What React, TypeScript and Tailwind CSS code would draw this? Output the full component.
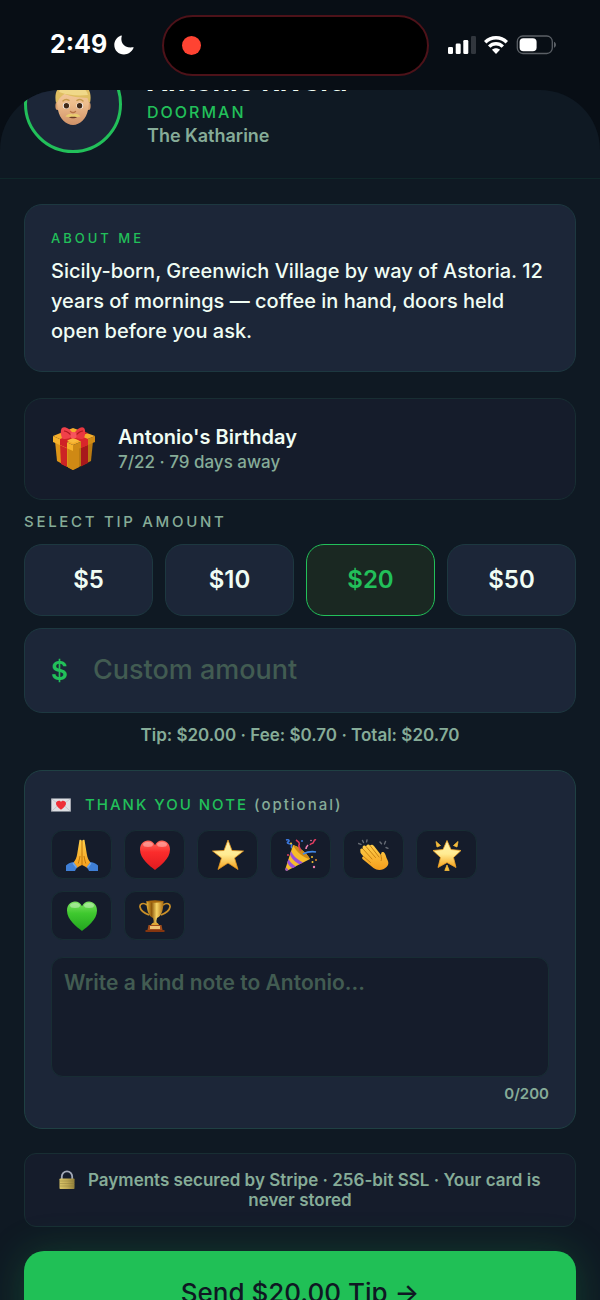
import React, { useState } from 'react';

interface Reaction {
    name: string;
    char: string;
    icon: React.ReactNode;
}

// gradients shared by all the emoji drawings
const Gradients = () => (
    <svg width="0" height="0" className="absolute" aria-hidden="true">
        <defs>
            <linearGradient id="skin" x1="0" y1="0" x2="0" y2="1">
                <stop offset="0" stopColor="#f6cfa4" />
                <stop offset="0.5" stopColor="#edbd8c" />
                <stop offset="1" stopColor="#cf9168" />
            </linearGradient>
            <linearGradient id="hand" x1="0" y1="0" x2="0" y2="1">
                <stop offset="0" stopColor="#ffcf4a" />
                <stop offset="1" stopColor="#f49d1c" />
            </linearGradient>
            <linearGradient id="red" x1="0" y1="0" x2="0" y2="1">
                <stop offset="0" stopColor="#ff6a5c" />
                <stop offset="0.4" stopColor="#fb2c2c" />
                <stop offset="1" stopColor="#e01a1f" />
            </linearGradient>
            <linearGradient id="green" x1="0" y1="0" x2="0" y2="1">
                <stop offset="0" stopColor="#7fe264" />
                <stop offset="0.4" stopColor="#3fc92f" />
                <stop offset="1" stopColor="#22a51f" />
            </linearGradient>
            <linearGradient id="star" x1="0" y1="0" x2="0" y2="1">
                <stop offset="0" stopColor="#fff3b0" />
                <stop offset="0.5" stopColor="#ffeb92" />
                <stop offset="1" stopColor="#f5a21b" />
            </linearGradient>
            <linearGradient id="gold" x1="0" y1="0" x2="1" y2="0">
                <stop offset="0" stopColor="#e9b53a" />
                <stop offset="0.3" stopColor="#8f5a0c" />
                <stop offset="0.6" stopColor="#f6d464" />
                <stop offset="1" stopColor="#a96a10" />
            </linearGradient>
            <linearGradient id="brass" x1="0" y1="0" x2="1" y2="0">
                <stop offset="0" stopColor="#d8c468" />
                <stop offset="0.5" stopColor="#c0aa55" />
                <stop offset="1" stopColor="#93803a" />
            </linearGradient>
        </defs>
    </svg>
);

const Face = () => (
    <svg viewBox="0 0 36 44" className="h-[44px] w-[36px]" aria-hidden="true">
        <ellipse cx="2.400" cy="24" rx="2" ry="4" fill="#d9a06f" />
        <ellipse cx="33.600" cy="24" rx="2" ry="4" fill="#d9a06f" />
        <path d="M2 15C2 5 9 1 18 1s16 4 16 14c0 4 0 9-1 13-1.500 8.500-8 15-15 15S4.500 36.500 3 28C2 24 2 19 2 15z" fill="url(#skin)" />
        <path d="M1 21C-2 6 7 0 18 0s20 6 17 21c-1.500-1-2-3-2.500-5-8-.5-16-1-23-4-3 2-5 4-6 6 0 1-1 2-2.500 3z" fill="#dfbd62" />
        <path d="M4 10c8 3 18 4 29 3-2-7-8-11-15-11S6 4 4 10z" fill="#f0d889" />
        <path d="M8 19c1.500-1.500 4-1.700 6-.6M22 18.400c2-1.100 4.500-.9 6 .6" stroke="#c79a4c" strokeWidth="1.500" fill="none" strokeLinecap="round" />
        <ellipse cx="11.200" cy="23.800" rx="3.400" ry="3" fill="#fff" />
        <ellipse cx="24.800" cy="23.800" rx="3.400" ry="3" fill="#fff" />
        <circle cx="11.400" cy="23.800" r="2.700" fill="#422a18" />
        <circle cx="24.600" cy="23.800" r="2.700" fill="#422a18" />
        <path d="M15.500 29.500c1.500 1.300 3.500 1.300 5 0" stroke="#b87445" strokeWidth="1.400" fill="none" strokeLinecap="round" />
        <path d="M10.500 34.500c2-3 5.500-3.500 7.500-2 2-1.500 5.500-1 7.500 2-3 .8-12 .8-15 0z" fill="#e9cc70" />
        <path d="M14 35.200c3-.6 5-.6 8 0-2 1.500-6 1.500-8 0z" fill="#6b3a24" />
    </svg>
);

const Gift = () => (
    <svg viewBox="0 0 42 44" className="h-[44px] w-[42px]" aria-hidden="true">
        <path d="M2 14l18 9v20L4 34z" fill="#dd9518" />
        <path d="M40 14l-20 9v20l18-9z" fill="#b97a12" />
        <path d="M20 23v20l6-3V20zM20 23v20l-5-2.500V21z" fill="#cf8914" />
        <path d="M7 17l7 3.500V40l-6-3z" fill="#cc2425" />
        <path d="M28 20l7-3.500V36l-7 3.500z" fill="#a8181c" />
        <path d="M0 9l20 9v6L0 15z" fill="#f6b22b" />
        <path d="M42 9l-22 9v6l22-9z" fill="#cf8a15" />
        <path d="M20 1l22 8-22 9L0 9z" fill="#f5ad2a" />
        <path d="M7 6l21 8.500v6.500l7-3v-6L14 3.500z" fill="#d9262b" />
        <path d="M35 6L14 15v6l-7-3v-6L28 3.500z" fill="#cf2226" />
        <path d="M20 11l6 2.400-6 2.600-6-2.600z" fill="#f8bb3c" />
        <path d="M20 7C17 1 11-1 9 1s-1 8 0 10 8 1 11-2z" fill="#f0404a" />
        <path d="M21 7c3-6 8-8 10-6s1 8 0 10-8 1-11-2z" fill="#e93740" />
        <path d="M11 4c2 0 5 2 7 4M30 4c-2 0-5 2-7 4" stroke="#ad1820" strokeWidth="1.200" fill="none" />
        <rect x="17.500" y="5" width="6" height="6.500" rx="2.500" fill="#f7545c" />
    </svg>
);

const LoveLetter = () => (
    <svg viewBox="0 0 20 14" className="h-[14px] w-[20px]" aria-hidden="true">
        <rect x="0.300" y="0.500" width="19.400" height="13" rx="0.600" fill="#dedfe3" />
        <path d="M.5 13.300L8 6.500M19.500 13.300L12 6.500M.5.700L10 8l9.500-7.300" stroke="#b9bbc2" strokeWidth="0.700" fill="none" />
        <path d="M10 11.800C6.500 9 5 7.500 5 5.500S6.500 2.700 8 2.700c.9 0 1.600.5 2 1.200.4-.7 1.100-1.200 2-1.200 1.500 0 3 .8 3 2.800s-1.500 3.500-5 6.300z" fill="#ee2f38" />
    </svg>
);

const Lock = () => (
    <svg viewBox="0 0 16 20" className="mr-1 inline-block h-[20px] w-[16px] align-[-4px]" aria-hidden="true">
        <path d="M2.800 9V6.500a5.200 5.200 0 0 1 10.400 0V9" stroke="#a2a9b8" strokeWidth="1.800" fill="none" />
        <rect x="0.500" y="8.500" width="15" height="10.500" rx="0.800" fill="url(#brass)" />
        <path d="M.5 11h15M.5 13.500h15M.5 16h15" stroke="#85743a" strokeWidth="0.400" />
    </svg>
);

const Pray = () => (
    <svg viewBox="0 0 32 32" className="h-8 w-8" aria-hidden="true">
        <path d="M13.500 1c1.300-.6 2.300.2 2.500 1.500V26c-2 1-4 2-6 3.500L7 24c2.500-2.500 3.500-5 4.200-9z" fill="url(#hand)" />
        <path d="M18.500 1c-1.300-.6-2.300.2-2.500 1.500V26c2 1 4 2 6 3.500l3-5.500c-2.500-2.500-3.500-5-4.200-9z" fill="url(#hand)" />
        <path d="M16 2v24M14 17c-.5 3-1 5-1.800 7.500M18 17c.5 3 1 5 1.800 7.500" stroke="#ba7007" strokeWidth="0.900" fill="none" />
        <path d="M0 26.500c2-2 4-3 7.500-3.500l3.500 5c-.5 1.500-1.500 2.500-2 4H0z" fill="#3f7fd6" />
        <path d="M32 26.500c-2-2-4-3-7.500-3.500L21 28c.5 1.500 1.500 2.500 2 4h9z" fill="#3f7fd6" />
        <path d="M7 24l3.500 4.500M25 24l-3.500 4.500" stroke="#6da7ee" strokeWidth="1.300" />
    </svg>
);

const heartPath = 'M16 31C11 27 1 20 1 10.500 1 5 4.500 1.500 9 1.500c3.200 0 5.700 1.900 7 4.700 1.300-2.800 3.800-4.700 7-4.700 4.500 0 8 3.500 8 9C31 20 21 27 16 31z';

const Heart: React.FC<{ fill: string }> = ({ fill }) => (
    <svg viewBox="0 0 32 32" className="h-8 w-8" aria-hidden="true">
        <path d={heartPath} fill={fill} />
        <ellipse cx="9" cy="5.500" rx="5" ry="2.500" fill="#fff" opacity="0.350" />
        <ellipse cx="23" cy="5.500" rx="5" ry="2.500" fill="#fff" opacity="0.350" />
    </svg>
);

const Star = () => (
    <svg viewBox="0 0 32 32" className="h-8 w-8" aria-hidden="true">
        <path d="M16 1l4 10.500 11.500.5-9 7 3.500 11.500-10-6.500-10 6.500L9.500 19l-9-7 11.500-.5z" fill="url(#star)" stroke="#e5971f" strokeWidth="0.800" strokeLinejoin="round" />
    </svg>
);

const Party = () => (
    <svg viewBox="0 0 32 32" className="h-8 w-8" aria-hidden="true">
        <path d="M8 6c5 1 14 8 17 14L2.500 31.500C1 32 0 31 .500 29.500z" fill="#f6bd2b" />
        <path d="M8 6c5 1 14 8 17 14-6-1-14-7-17-14z" fill="#cf8a18" />
        <path d="M6 12c2 5 7 9 12 11.500l-3.500 1.800C10.500 23.500 6.500 19.500 5 15.500zM3.500 20c1.500 3 4.500 6 7.500 7.500l-3.500 1.700C5 27.700 3 25.500 2.200 23.500zM1 28.500l2.500 2.600-1.500.6C.6 32 0 31 .500 30z" fill="#9a51d6" />
        <path d="M1 1c3-1 4 1 2 2s1 2 3 2-1 3 1 4" stroke="#3b78dd" strokeWidth="1.500" fill="none" />
        <path d="M11 1c3 2 4 3 3 5s2 3 1 6M31 1c-2-1-2 2-3 3s-2 0-3 2" stroke="#e13c5f" strokeWidth="1.600" fill="none" />
        <path d="M18 15c4-2 8-3 13-2" stroke="#4289e7" strokeWidth="1.700" fill="none" />
        <path d="M21 10c0-2 1-3 2-4" stroke="#ed7fae" strokeWidth="1.600" fill="none" />
        <circle cx="17" cy="2" r="1" fill="#3b78dd" />
        <circle cx="6" cy="4.500" r="1" fill="#f4c531" />
        <circle cx="26" cy="1.500" r="0.800" fill="#ed7fae" />
        <circle cx="27" cy="18" r="1" fill="#f4c531" />
        <circle cx="31" cy="21" r="1" fill="#e38a29" />
        <circle cx="27.500" cy="23" r="1" fill="#f4c531" />
        <circle cx="29" cy="28" r="1.200" fill="#ed7fae" />
        <circle cx="3" cy="16" r="1" fill="#e13c5f" />
    </svg>
);

const Clap = () => (
    <svg viewBox="0 0 32 32" className="h-8 w-8" aria-hidden="true">
        <path d="M2.500 12c-1-2 1-3.300 2.500-2l-.5-2c.5-2 2.500-2 3.500-.7C9 5.300 11 5 12 6.500c1.500-1.500 3-.8 4 .5l7 9c0-2 .5-3.500 2-3 2.500.5 2.500 4 4.500 8 1.500 3 1 5-1 7-3.500 3.500-9 4-13 1L4.500 20c-1-1.500 0-2.500 1-2.500L3 14.500c-.7-1-.8-2-.5-2.500z" fill="url(#hand)" />
        <path d="M5 10l9 10M8 7.500l9.500 11M12 6.500l9 11.500M5.500 17.500l7 6" stroke="#c27a10" strokeWidth="0.900" fill="none" strokeLinecap="round" />
        <path d="M23 16c0 2 1 4 0 6" stroke="#c27a10" strokeWidth="0.900" fill="none" />
        <path d="M.5 4.500l2.500.8M4.500 1.500l1 2M9 1l-.4 1.800M22 3l1.500 1.700M27.500 2.500L26.500 5M28 8.500l2 .8" stroke="#666c75" strokeWidth="1.400" strokeLinecap="round" />
    </svg>
);

const GlowStar = () => (
    <svg viewBox="0 0 32 32" className="h-8 w-8" aria-hidden="true">
        <path d="M16 1.500l4 9 10 1-7.500 7 2.500 10-9-5-9 5 2.500-10-7.500-7 10-1z" fill="url(#star)" stroke="#f0a428" strokeWidth="0.800" strokeLinejoin="round" />
        <path d="M5 2.500l4.500 4L6 8zM27 2.500l-4.500 4L26 8zM16 26l2.200 5.500h-4.400z" fill="#f6bd3b" stroke="#f6bd3b" strokeWidth="0.800" strokeLinejoin="round" />
    </svg>
);

const Trophy = () => (
    <svg viewBox="0 0 32 32" className="h-8 w-8" aria-hidden="true">
        <path d="M8 5C4 2 .500 4 1 7s4 6 9 8M24 5c4-3 7.500-1 7 2s-4 6-9 8" stroke="#c98f28" strokeWidth="1.700" fill="none" />
        <path d="M7.500 1h17c0 8-1.500 15-6.500 17l-.7 3 .7 3h-4l.7-3-.7-3C9 16 7.500 9 7.500 1z" fill="url(#gold)" />
        <ellipse cx="16" cy="1.500" rx="8.500" ry="1.200" fill="#a8690f" />
        <path d="M13.500 23h5l2 2.500h-9z" fill="#e0a834" />
        <path d="M9.500 25h13l1 5h-15z" fill="#a04c1b" />
        <rect x="11" y="26" width="10" height="3" fill="#f0c473" />
        <path d="M6.500 30h19v2h-19z" fill="#84350f" />
    </svg>
);

const reactions: Reaction[] = [
    { name: 'Thank you', char: '🙏', icon: <Pray /> },
    { name: 'Love', char: '❤️', icon: <Heart fill="url(#red)" /> },
    { name: 'Star', char: '⭐', icon: <Star /> },
    { name: 'Celebrate', char: '🎉', icon: <Party /> },
    { name: 'Applause', char: '👏', icon: <Clap /> },
    { name: 'Glowing star', char: '🌟', icon: <GlowStar /> },
    { name: 'Green heart', char: '💚', icon: <Heart fill="url(#green)" /> },
    { name: 'Trophy', char: '🏆', icon: <Trophy /> },
];

const amounts = [5, 10, 20, 50];
const NOTE_LIMIT = 200;
const FEE_RATE = 0.035;

const StatusBar = () => (
    <header className="flex h-[90px] shrink-0 items-center justify-between pr-11 pl-[50px] text-white">
        <div className="flex items-center gap-[7px]">
            <span className="text-[25px] font-bold">2:49</span>
            <svg viewBox="0 0 20 20" className="h-5 w-5" fill="currentColor" aria-hidden="true">
                <path d="M7.800 1C6 6.800 9.500 13.500 19 12.300c.6-.1.800.3.500.8C17.600 17 14 19.500 10 19.500 4.600 19.500.300 15.400.300 10 .300 5.700 3 2 7 .5c.6-.2 1 0 .8.5z" />
            </svg>
        </div>
        <div className="mr-[-8px] flex h-[61px] w-[267px] items-center rounded-full border-2 border-[#4d1219] bg-black px-[18px]">
            <span className="h-[19px] w-[19px] rounded-full bg-[#ff4332]" />
        </div>
        <div className="flex items-center gap-2">
            <svg viewBox="0 0 28 18" className="h-[18px] w-[28px]" aria-hidden="true">
                <rect x="0" y="11" width="5" height="7" rx="1.300" fill="#fff" />
                <rect x="7.700" y="7.500" width="5" height="10.500" rx="1.300" fill="#fff" />
                <rect x="15.300" y="4" width="5" height="14" rx="1.300" fill="#fff" />
                <rect x="23" y="0" width="5" height="18" rx="1.300" fill="#31363d" />
            </svg>
            <svg viewBox="0 0 24 18" className="h-[18px] w-[24px]" fill="none" stroke="#fff" strokeWidth="3.400" aria-hidden="true">
                <path d="M1.200 6.200c6-6 15.600-6 21.600 0" />
                <path d="M5.200 10.600c3.800-3.800 9.800-3.800 13.600 0" />
                <path d="M12 18l-4-4.200c2.200-2 5.800-2 8 0z" fill="#fff" stroke="none" />
            </svg>
            <svg viewBox="0 0 40 20" className="h-[20px] w-[40px]" aria-hidden="true">
                <rect x="1.300" y="1" width="35" height="17.500" rx="5.500" fill="none" stroke="#5b6066" strokeWidth="1.300" />
                <rect x="3.600" y="3.300" width="17" height="13" rx="3.800" fill="#fff" />
                <path d="M38 6.800c2.600 1 2.600 5 0 6z" fill="#5b6066" />
            </svg>
        </div>
    </header>
);

const App: React.FC = () => {
    const [tip, setTip] = useState(20);
    const [custom, setCustom] = useState('');
    const [note, setNote] = useState('');

    const amount = custom ? Number(custom) || 0 : tip;
    const fee = amount * FEE_RATE;

    const addReaction = (char: string) => {
        setNote(prev => (prev + char).slice(0, NOTE_LIMIT));
    };

    return (
        <div className="flex h-screen flex-col overflow-hidden bg-[#080e15] font-['Inter',sans-serif] font-medium text-[#f0fdf4]">
            <Gradients />
            <StatusBar />

            <div className="min-h-0 flex-1 overflow-hidden rounded-t-[60px] bg-[#0f1923]">
                {/* profile, scrolled partly under the top of the sheet */}
                <section className="-mt-[35px] flex gap-[25px] border-b border-[#10282a] px-6 pb-[25px]">
                    <div className="flex h-[98px] w-[98px] shrink-0 items-center justify-center rounded-full border-3 border-[#22c05a] bg-[#1c2638]">
                        <Face />
                    </div>
                    <div className="pt-[7px]">
                        <h1 className="text-[28px] leading-[38px] font-bold">Antonio Rivera</h1>
                        <p className="text-base leading-6 tracking-[2px] text-[#22c05a]">DOORMAN</p>
                        <p className="text-lg leading-6 font-semibold text-[#86ac98]">The Katharine</p>
                    </div>
                </section>

                <main className="px-6 pt-[25px]">
                    <section className="rounded-[18px] border border-[#1d3840] bg-[#1c2638] px-[26px] py-[25px]">
                        <h2 className="mb-[10px] text-[13px] leading-4 tracking-[3px] text-[#22c05a]">ABOUT ME</h2>
                        <p className="text-xl leading-[30px]">
                            Sicily-born, Greenwich Village by way of Astoria. 12 years of mornings — coffee in hand, doors held open before you ask.
                        </p>
                    </section>

                    <section className="mt-[26px] flex items-center gap-[23px] rounded-[18px] border border-[#182e33] bg-[#151c2b] px-[28px] py-[25px]">
                        <Gift />
                        <div>
                            <h2 className="text-xl leading-[26px] font-semibold">Antonio's Birthday</h2>
                            <p className="text-[17px] leading-6 text-[#86ac98]">7/22 · 79 days away</p>
                        </div>
                    </section>

                    <h2 className="mt-3 text-[15px] leading-5 tracking-[0.18em] text-[#86ac98]">SELECT TIP AMOUNT</h2>
                    <div className="mt-3 grid grid-cols-4 gap-3">
                        {amounts.map(value => (
                            <button
                                key={value}
                                type="button"
                                aria-pressed={!custom && tip === value}
                                onClick={() => {
                                    setTip(value);
                                    setCustom('');
                                }}
                                className={`h-[72px] rounded-[18px] border text-2xl font-semibold ${
                                    !custom && tip === value
                                        ? 'border-[#22c05a] bg-[#1a2822] text-[#22c05a]'
                                        : 'border-[#1d3840] bg-[#1c2638]'
                                }`}
                            >
                                ${value}
                            </button>
                        ))}
                    </div>

                    <label className="mt-3 flex h-[85px] items-center gap-[25px] rounded-[18px] border border-[#1d3840] bg-[#1c2638] px-[26px]">
                        <span className="text-[26px] font-semibold text-[#22c05a]">$</span>
                        <input
                            type="text"
                            inputMode="decimal"
                            aria-label="Custom amount"
                            placeholder="Custom amount"
                            value={custom}
                            onChange={e => setCustom(e.target.value)}
                            className="min-w-0 flex-1 bg-transparent text-[27px] outline-none placeholder:text-[#425c52]"
                        />
                    </label>

                    <p className="mt-3 text-center text-[17px] leading-5 font-semibold text-[#86ac98]">
                        Tip: ${amount.toFixed(2)} · Fee: ${fee.toFixed(2)} · Total: ${(amount + fee).toFixed(2)}
                    </p>

                    <section className="mt-[25px] rounded-[18px] border border-[#1f4043] bg-[#1c2638] px-[26px] py-6">
                        <h2 className="flex items-center gap-[14px] text-[15px] leading-5 tracking-[2px] text-[#22c05a]">
                            <LoveLetter />
                            <span>
                                THANK YOU NOTE <span className="text-[#86ac98]">(optional)</span>
                            </span>
                        </h2>
                        <div className="mt-[15px] flex flex-wrap gap-3">
                            {reactions.map(reaction => (
                                <button
                                    key={reaction.name}
                                    type="button"
                                    aria-label={reaction.name}
                                    onClick={() => addReaction(reaction.char)}
                                    className="flex h-[49px] w-[61px] items-center justify-center rounded-xl border border-[#182d34] bg-[#151c2b]"
                                >
                                    {reaction.icon}
                                </button>
                            ))}
                        </div>
                        <textarea
                            aria-label="Thank you note"
                            placeholder="Write a kind note to Antonio..."
                            maxLength={NOTE_LIMIT}
                            value={note}
                            onChange={e => setNote(e.target.value)}
                            className="mt-[17px] block h-[120px] w-full resize-none rounded-xl border border-[#182d34] bg-[#151c2b] px-3 py-[11px] text-[21px] leading-7 font-semibold outline-none placeholder:text-[#425c52]"
                        />
                        <p className="mt-[7px] text-right text-[15px] leading-5 font-semibold text-[#86ac98]">{note.length}/{NOTE_LIMIT}</p>
                    </section>

                    <p className="mt-6 rounded-xl border border-[#182e33] bg-[#151c2b] px-6 py-4 text-center text-[17px] leading-5 font-semibold text-[#86ac98]">
                        <Lock />&nbsp; Payments secured by Stripe · 256-bit SSL · Your card is never stored
                    </p>

                    <button
                        type="button"
                        className="mt-6 h-[82px] w-full rounded-[20px] bg-[#20c056] text-[26px] text-[#0f1823] shadow-[0_4px_40px_rgba(32,192,86,0.25)]"
                    >
                        Send ${amount.toFixed(2)} Tip →
                    </button>
                </main>
            </div>
        </div>
    );
};

export default App;
